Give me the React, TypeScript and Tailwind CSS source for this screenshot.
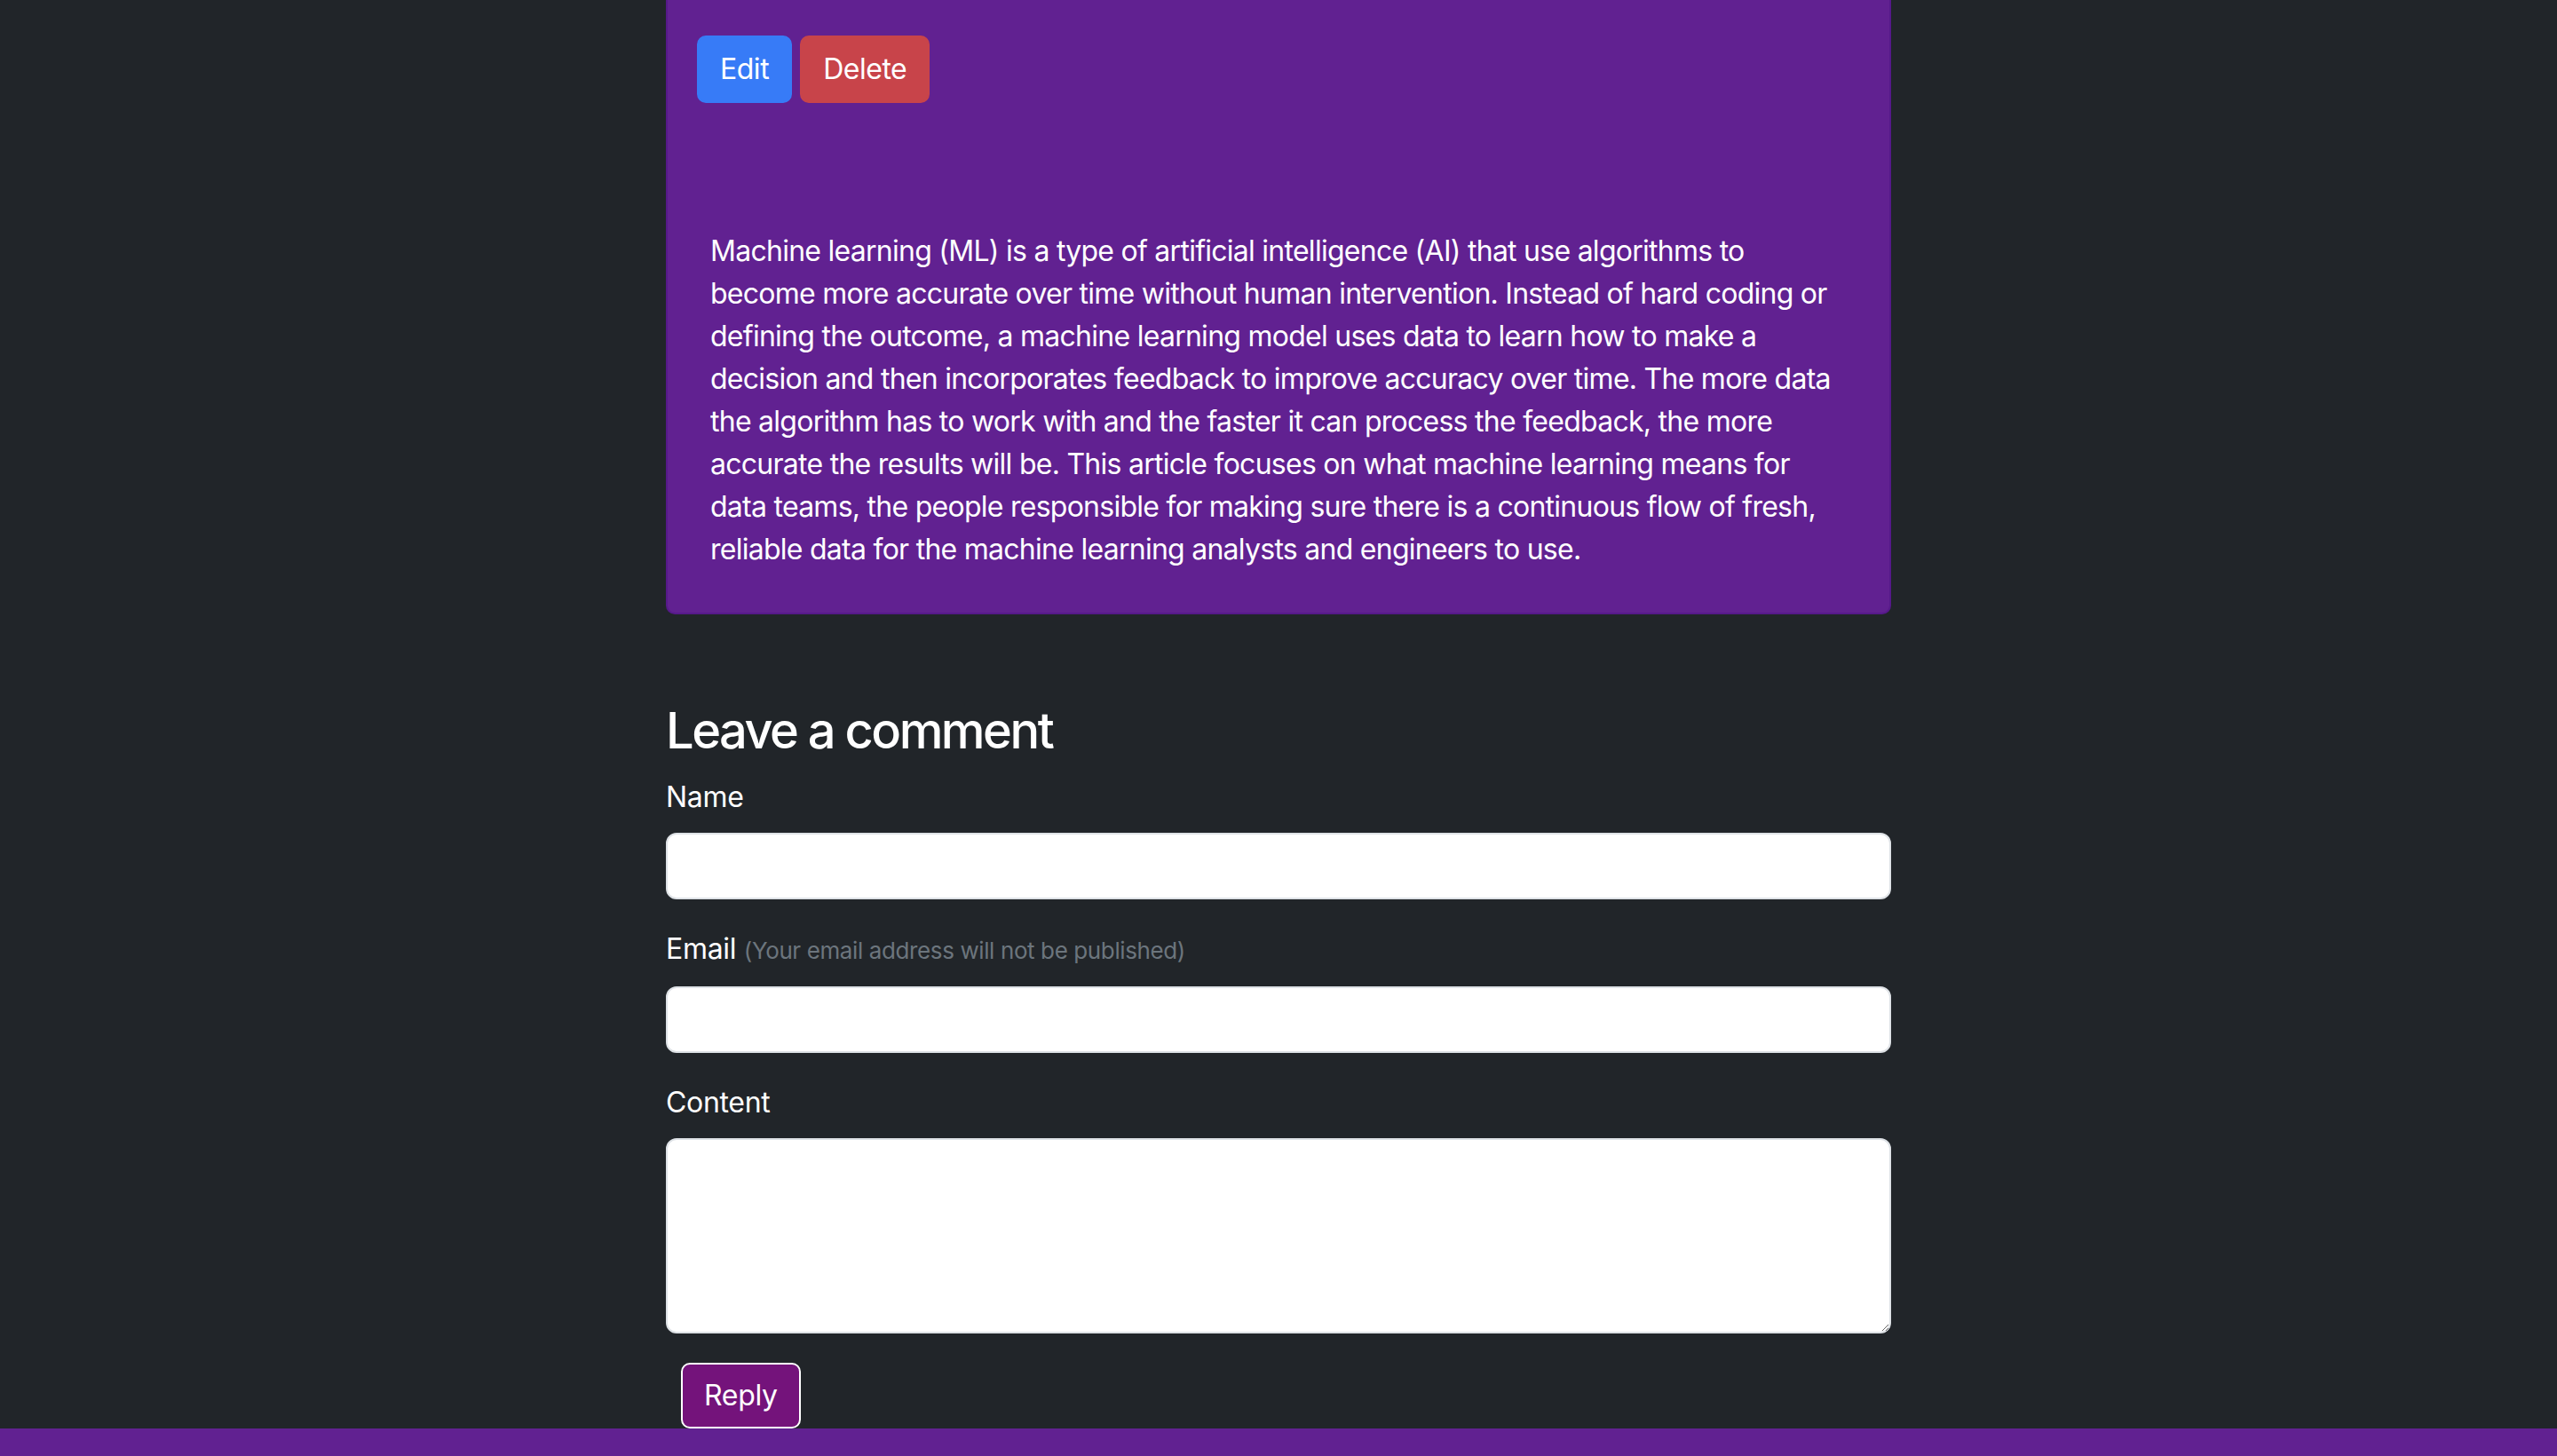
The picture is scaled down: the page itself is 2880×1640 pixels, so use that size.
import React from 'react';

const postLines = [
  'Machine learning (ML) is a type of artificial intelligence (AI) that use algorithms to',
  'become more accurate over time without human intervention. Instead of hard coding or',
  'defining the outcome, a machine learning model uses data to learn how to make a',
  'decision and then incorporates feedback to improve accuracy over time. The more data',
  'the algorithm has to work with and the faster it can process the feedback, the more',
  'accurate the results will be. This article focuses on what machine learning means for',
  'data teams, the people responsible for making sure there is a continuous flow of fresh,',
  'reliable data for the machine learning analysts and engineers to use.',
];

export default function App() {
  return (
    <div className="min-h-[1640px] bg-[#212529] flex flex-col font-['Inter',sans-serif] tracking-[-0.02em] text-white">
      <main className="flex-1 w-[1380px] mx-auto">
        {/* post card */}
        <div className="bg-[#612191] border-2 border-t-0 border-[#56198a] rounded-b-[10px] pt-[40px] pb-[47px]">
          <div className="flex gap-[9px] pl-[33px] tracking-[-0.03em]">
            <button className="bg-[#377bf7] border-2 border-[#377bf7] rounded-[10px] px-[24px] py-[12px] text-[32px] leading-[48px]">
              Edit
            </button>
            <button className="bg-[#c8444a] border-2 border-[#c8444a] rounded-[10px] px-[24px] py-[12px] text-[32px] leading-[48px]">
              Delete
            </button>
          </div>
          <p className="mt-[143px] px-[48px] text-[32px] leading-[48px] tracking-[-0.023em]">
            {postLines.map((line) => (
              <span key={line} className="block whitespace-nowrap">
                {line}
              </span>
            ))}
          </p>
        </div>

        {/* comment form */}
        <h3 className="mt-[96px] mb-[16px] text-[56px] leading-[70px] font-medium tracking-[-0.045em]">
          Leave a comment
        </h3>
        <form>
          <div className="mb-[32px]">
            <label className="block mb-[16px] text-[32px] leading-[48px]">Name</label>
            <input
              type="text"
              className="block w-full h-[75px] bg-white text-[#212529] border-2 border-[#dee2e6] rounded-[12px] px-[24px] text-[32px]"
            />
          </div>
          <div className="mb-[32px]">
            <label className="block mb-[16px] text-[32px] leading-[48px]">
              Email{' '}
              <span className="text-[26px] tracking-[-0.015em] text-[#6c757d]">
                (Your email address will not be published)
              </span>
            </label>
            <input
              type="email"
              className="block w-full h-[75px] bg-white text-[#212529] border-2 border-[#dee2e6] rounded-[12px] px-[24px] text-[32px]"
            />
          </div>
          <div>
            <label className="block mb-[16px] text-[32px] leading-[48px]">Content</label>
            <textarea
              rows={4}
              className="block w-full h-[220px] bg-white text-[#212529] border-2 border-[#dee2e6] rounded-[12px] px-[24px] py-[12px] text-[32px] leading-[48px]"
            />
          </div>
          <button
            type="button"
            className="mt-[33px] ml-[17px] bg-[#74137b] border-2 border-white rounded-[10px] px-[24px] py-[11px] text-[32px] leading-[48px]"
          >
            Reply
          </button>
        </form>
      </main>
      <footer className="h-[33px] bg-[#612191]" />
    </div>
  );
}
